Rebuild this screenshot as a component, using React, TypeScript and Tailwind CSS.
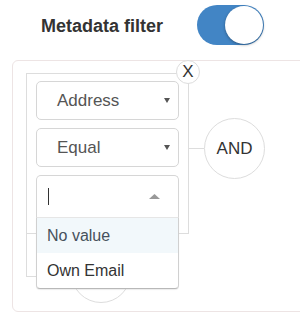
import React from "react";

function Caret() {
  return (
    <svg width="6" height="5" viewBox="0 0 6 5" className="block">
      <polygon points="0,0 6,0 3,5" fill="#555" />
    </svg>
  );
}

function SelectBox({ label }: { label: string }) {
  return (
    <div className="flex items-center justify-between h-[39px] border border-[#d6d6d6] rounded-[5px] pl-[20px] pr-[8px] bg-white">
      <span className="text-[17px] text-[#555]">{label}</span>
      <Caret />
    </div>
  );
}

export default function App() {
  const options = ["No value", "Own Email"];

  return (
    <div className="w-[300px] h-[314px] overflow-hidden bg-white font-['Liberation_Sans',Arial,sans-serif]">
      <div className="flex items-center h-[50px] pl-[41px]">
        <div className="w-[156px] mt-[3px] text-[18px] font-bold text-[#333]">Metadata filter</div>
        <div className="flex items-center justify-end w-[67px] h-[40px] rounded-full bg-[#4285c5] pr-[1px]">
          <div className="w-[38px] h-[38px] rounded-full bg-white shadow-[0_1px_3px_rgba(0,0,0,0.35)]" />
        </div>
      </div>

      <div className="mt-[10px] ml-[12px] w-[300px] h-[252px] border border-[#ede4e4] rounded-[6px] pl-[13px] pt-[12px]">
        <div className="flex items-start">
          <div className="relative w-[163px] border border-[#ddd] pt-[7px] px-[9px] pb-[15px] flex flex-col gap-[8px]">
            <div className="absolute left-[149px] -top-[14px] w-[24px] h-[24px] rounded-full border border-[#ddd] bg-white flex items-center justify-center text-[17px] text-[#333]">
              X
            </div>
            <SelectBox label="Address" />
            <SelectBox label="Equal" />
            <div className="relative z-10">
              <div className="flex items-center justify-between h-[43px] border border-[#d6d6d6] border-b-[#e6e6e6] rounded-t-[5px] pl-[11px] pr-[18px] bg-white">
                <div className="w-px h-[17px] bg-[#333]" />
                <svg width="11" height="5" viewBox="0 0 11 5" className="block">
                  <polygon points="0,5 5.5,0 11,5" fill="#999" />
                </svg>
              </div>
              <div className="absolute left-0 right-0 top-full bg-white border-x border-b border-[#d0d0d0] border-b-[#b8b8b8] rounded-b-[4px] shadow-[0_1px_1px_rgba(0,0,0,0.08)]">
                {options.map((o, i) => (
                  <div
                    key={o}
                    className={
                      i === 0
                        ? "h-[35px] flex items-center pl-[10px] text-[16px] text-[#46515c] bg-[#f2f8fb]"
                        : "h-[35px] flex items-center pl-[10px] text-[16px] text-[#333]"
                    }
                  >
                    {o}
                  </div>
                ))}
              </div>
            </div>
          </div>
          <div className="w-[15px] h-px bg-[#ddd] mt-[75px]" />
          <div className="mt-[45px] w-[61px] h-[61px] rounded-full border border-[#ddd] flex items-center justify-center text-[17px] text-[#333]">
            AND
          </div>
        </div>
        <div className="w-[120px] h-[43px] border-l border-b border-[#ddd]" />
        <div className="-mt-[34px] ml-[45px] w-[60px] h-[60px] rounded-full border border-[#ddd] bg-white" />
      </div>
    </div>
  );
}
